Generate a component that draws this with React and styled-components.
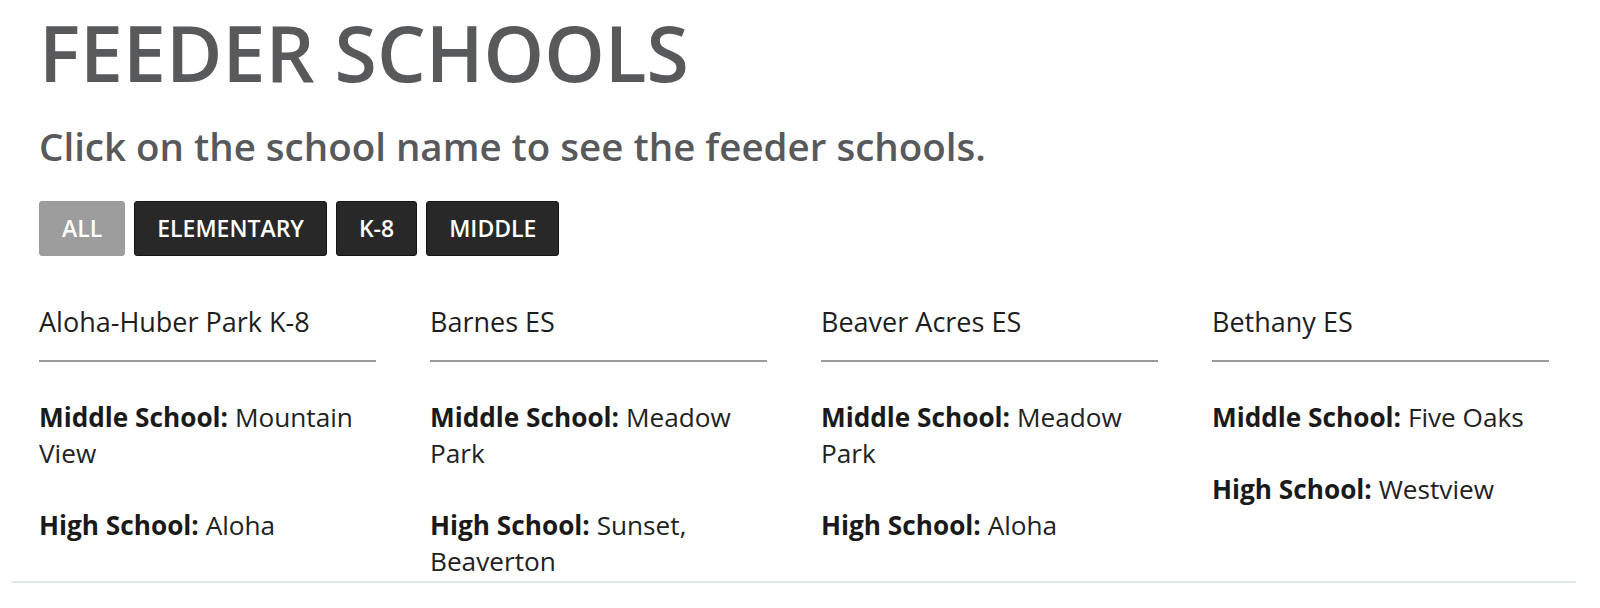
import React from "react";
import styled, { createGlobalStyle } from "styled-components";

const Global = createGlobalStyle`
  html, body { margin: 0; padding: 0; background: #fff; }
  body { font-family: "Open Sans", "Noto Sans", sans-serif; color: #222; }
`;

const Page = styled.div`
  margin: 0 24px 0 12px;
  padding: 14px 0 2px 27px;
  border-bottom: 2px solid #e1e5ee;
`;

const Title = styled.h1`
  margin: 0;
  font-size: 77px;
  line-height: 1;
  font-weight: 600;
  color: #58595b;
`;

const Subtitle = styled.p`
  margin: 36px 0 0;
  font-size: 38.5px;
  line-height: 1;
  font-weight: 600;
  color: #58595b;
`;

const Filters = styled.div`
  display: flex;
  gap: 9px;
  margin-top: 35px;
`;

const FilterButton = styled.button`
  display: inline-flex;
  align-items: center;
  height: 55px;
  padding: 0 22px;
  border: 1px solid ${(p) => (p.$active ? "#9b9b9b" : "#151515")};
  border-radius: 3px;
  background: ${(p) => (p.$active ? "#9d9d9d" : "#282828")};
  color: #fff;
  font-family: "Open Sans", sans-serif;
  font-size: 23px;
  font-weight: 600;
  text-transform: uppercase;
  cursor: pointer;
`;

const Grid = styled.div`
  display: grid;
  grid-template-columns: repeat(4, 337px);
  column-gap: 54px;
  margin-top: 52px;
`;

const Card = styled.div`
  display: flex;
  flex-direction: column;
`;

const SchoolName = styled.h3`
  margin: 0;
  font-size: 27px;
  line-height: 1;
  font-weight: 400;
  color: #1e1e1e;
`;

const Rule = styled.hr`
  margin: 25px 0 37px;
  border: 0;
  height: 2px;
  background: #9a9a9a;
`;

const Feeder = styled.p`
  margin: 0 0 36px;
  font-size: 26.2px;
  line-height: 36px;
  color: #222;
  &:last-child { margin-bottom: 0; }
  strong { font-weight: 700; color: #1a1a1a; }
`;

const schools = [
  { name: "Aloha-Huber Park K-8", ms: "Mountain View", hs: "Aloha" },
  { name: "Barnes ES", ms: "Meadow Park", hs: "Sunset, Beaverton" },
  { name: "Beaver Acres ES", ms: "Meadow Park", hs: "Aloha" },
  { name: "Bethany ES", ms: "Five Oaks", hs: "Westview" },
];

const filters = ["All", "Elementary", "K-8", "Middle"];

export default function App() {
  return (
    <>
      <Global />
      <Page>
        <Title>FEEDER SCHOOLS</Title>
        <Subtitle>Click on the school name to see the feeder schools.</Subtitle>
        <Filters>
          {filters.map((f, i) => (
            <FilterButton key={f} $active={i === 0}>{f}</FilterButton>
          ))}
        </Filters>
        <Grid>
          {schools.map((s) => (
            <Card key={s.name}>
              <SchoolName>{s.name}</SchoolName>
              <Rule />
              <Feeder><strong>Middle School:</strong> {s.ms}</Feeder>
              <Feeder><strong>High School:</strong> {s.hs}</Feeder>
            </Card>
          ))}
        </Grid>
      </Page>
    </>
  );
}
